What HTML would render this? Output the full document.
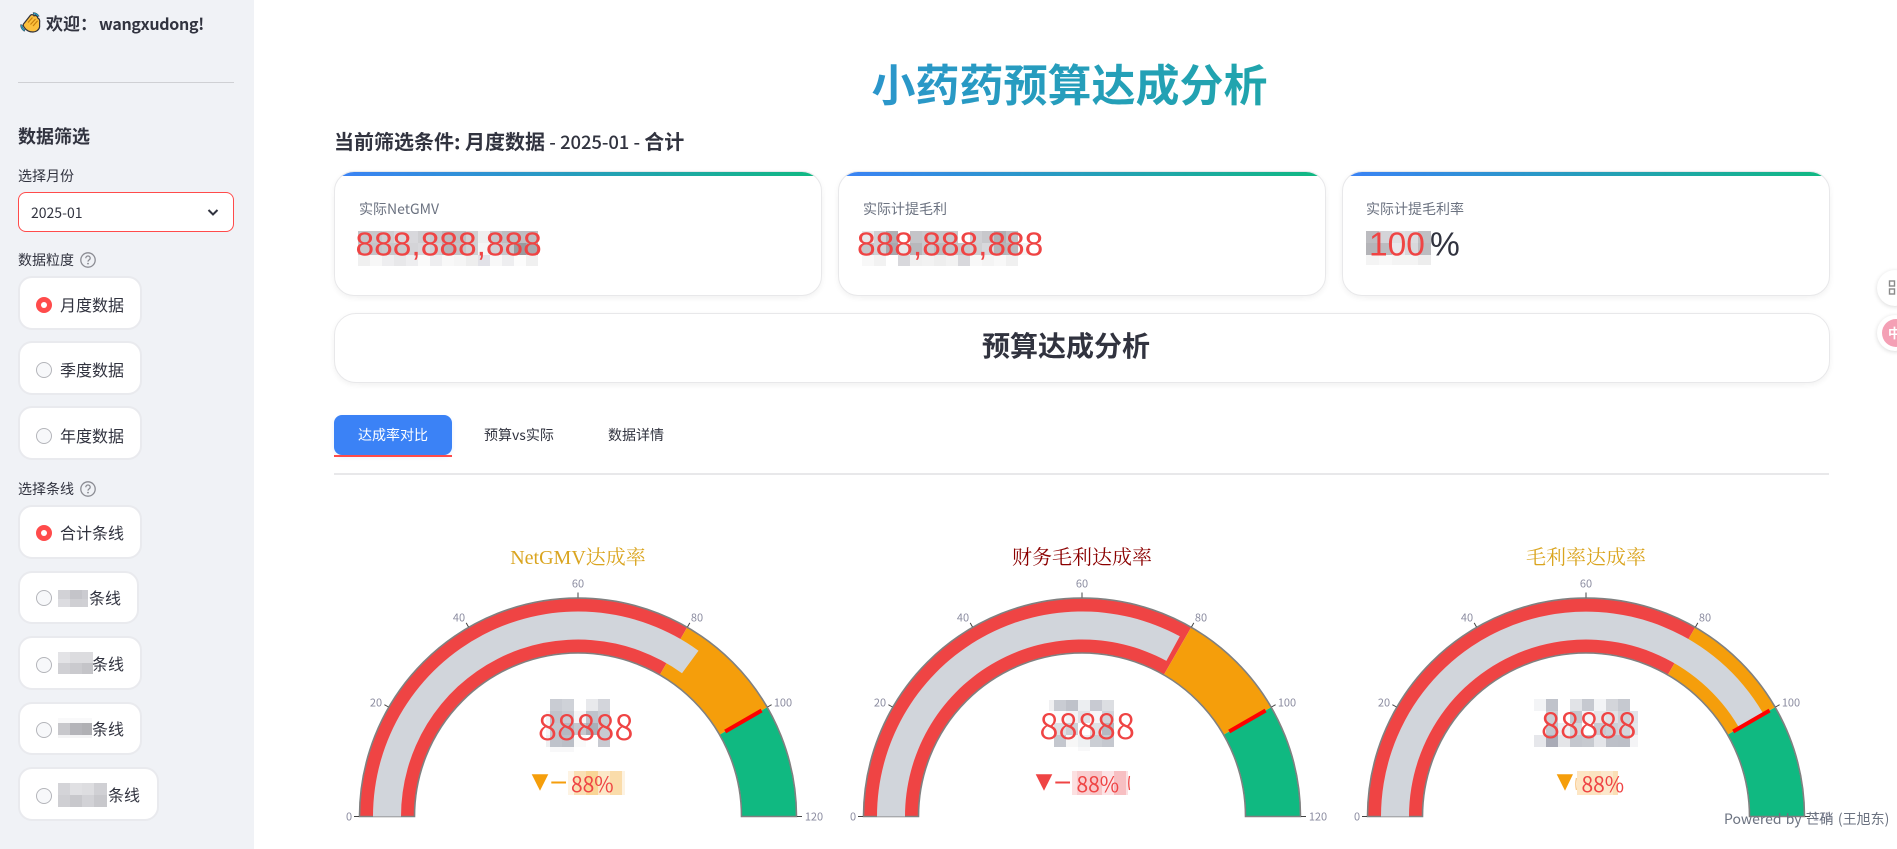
<!DOCTYPE html>
<html lang="zh"><head><meta charset="utf-8"><title>小药药预算达成分析</title>
<style>
html,body{margin:0;padding:0;width:1897px;height:849px;overflow:hidden;background:#fff}
body{position:relative;font-family:"Noto Sans CJK SC","Liberation Sans",sans-serif;color:#31333f}
.a{position:absolute;white-space:nowrap;line-height:1}
.side{position:absolute;left:0;top:0;width:254px;height:849px;background:#f0f2f6}
.radio{position:absolute;left:18px;background:#fff;border:2px solid #e9eaee;border-radius:14px;box-sizing:border-box}
.rc{position:absolute;left:36px;width:16px;height:16px;border-radius:50%;border:1px solid #b4b5ba;background:#f7f8fa;box-sizing:border-box}
.rs{position:absolute;left:36px;width:16px;height:16px;border-radius:50%;background:#ff4b4b}
.rs:after{content:"";position:absolute;left:5px;top:5px;width:6px;height:6px;border-radius:50%;background:#fff}
.rt{font-size:16px}
.card{position:absolute;top:171px;width:488px;height:125px;background:#fff;border:1px solid #e8e8ea;border-radius:20px;box-sizing:border-box;overflow:hidden;box-shadow:0 2px 6px rgba(0,0,0,.06)}
.card:before{content:"";position:absolute;left:0;top:0;right:0;height:4px;background:linear-gradient(90deg,#3b82f6,#10b981)}
.lab{font-size:14px;color:#6b7280}
svg{position:absolute;left:0;top:0}
</style></head><body>

<div class="side"></div>
<svg class="a" style="left:20px;top:12px" width="21" height="21" viewBox="0 0 21 21">
<path d="M3.5 12L10.5 3.2C11.5 2.2 13.5 2.6 14 3.8C15.5 3 17.6 4 17.6 5.8C19.3 6.8 20 8.8 19.6 10.8L19.6 15C19 18 16 20 13 20C9 20 6 18 4.3 15.5C3.4 14.2 2.8 13 3.5 12Z" fill="#fbbf3c" stroke="#33343c" stroke-width="1.2"/>
<path d="M8 10.5L12.5 5.5M10.5 12.5L15.5 7M13 14L17.6 8.8" stroke="#c47d0c" stroke-width="1.1" fill="none"/>
<path d="M13 .6C15.5 .4 18 1.8 19.2 4.2L17.4 4.4C16.4 3 15 2.2 13.4 2.2Z" fill="#1f9ec2" stroke="#33343c" stroke-width=".5"/>
<path d="M.6 12.5C.4 15 1.6 18 4.4 19.4L5 17.8C3.4 16.8 2.4 15 2.2 13Z" fill="#1f9ec2" stroke="#33343c" stroke-width=".5"/>
</svg>
<div class="a" style="left:46px;top:14px;font-size:17px;font-weight:700">欢迎：</div>
<div class="a" style="left:99px;top:15px;font-size:16px;font-weight:700;letter-spacing:-.3px">wangxudong!</div>
<div class="a" style="left:18px;top:82px;width:216px;height:1px;background:#cfd0d4"></div>
<div class="a" style="left:18px;top:127px;font-size:18px;font-weight:700">数据筛选</div>
<div class="a" style="left:18px;top:169px;font-size:14px">选择月份</div>
<div class="a" style="left:18px;top:192px;width:216px;height:40px;background:#fff;border:1px solid #ff4b4b;border-radius:8px;box-sizing:border-box"></div>
<div class="a" style="left:31px;top:206px;font-size:14px">2025-01</div>
<div class="a" style="left:18px;top:253px;font-size:14px">数据粒度</div>
<div class="a" style="left:18px;top:482px;font-size:14px">选择条线</div>

<div class="radio" style="top:276px;width:124px;height:54px"></div>
<div class="rs" style="top:297px"></div><div class="a rt" style="left:60px;top:296px">月度数据</div>
<div class="radio" style="top:341px;width:124px;height:54px"></div>
<div class="rc" style="top:362px"></div><div class="a rt" style="left:60px;top:361px">季度数据</div>
<div class="radio" style="top:406px;width:124px;height:54px"></div>
<div class="rc" style="top:428px"></div><div class="a rt" style="left:60px;top:427px">年度数据</div>
<div class="radio" style="top:505px;width:124px;height:54px"></div>
<div class="rs" style="top:525px"></div><div class="a rt" style="left:60px;top:524px">合计条线</div>
<div class="radio" style="top:571px;width:121px;height:53px"></div>
<div class="rc" style="top:590px"></div><div class="a rt" style="left:89px;top:589px">条线</div>
<div class="radio" style="top:636px;width:124px;height:54px"></div>
<div class="rc" style="top:657px"></div><div class="a rt" style="left:92px;top:655px">条线</div>
<div class="radio" style="top:702px;width:124px;height:53px"></div>
<div class="rc" style="top:722px"></div><div class="a rt" style="left:92px;top:720px">条线</div>
<div class="radio" style="top:767px;width:141px;height:54px"></div>
<div class="rc" style="top:788px"></div><div class="a rt" style="left:108px;top:786px">条线</div>

<div class="a" style="left:334px;top:60px;width:1471px;height:46px;font-size:44px;font-weight:700;text-align:center;background:linear-gradient(90deg,#3b82f6,#10b981);-webkit-background-clip:text;background-clip:text;color:transparent">小药药预算达成分析</div>
<div class="a" style="left:334px;top:131px;font-size:20px;font-weight:700">当前筛选条件: 月度数据<span style="font-size:18.5px;font-weight:500;letter-spacing:-.1px;word-spacing:.2px"> - 2025-01 - </span>合计</div>

<div class="card" style="left:334px"></div>
<div class="card" style="left:838px"></div>
<div class="card" style="left:1342px"></div>
<div class="a" style="left:334px;top:313px;width:1496px;height:70px;background:#fff;border:1px solid #e8e8ea;border-radius:22px;box-sizing:border-box;box-shadow:0 2px 6px rgba(0,0,0,.06)"></div>
<div class="a" style="left:319px;top:331px;width:1494px;text-align:center;font-size:28px;font-weight:700">预算达成分析</div>

<div class="a lab" style="left:359px;top:202px">实际NetGMV</div>
<div class="a lab" style="left:863px;top:202px">实际计提毛利</div>
<div class="a lab" style="left:1366px;top:202px">实际计提毛利率</div>

<div class="a" style="left:334px;top:415px;width:118px;height:40px;background:#3b82f6;border-radius:8px;box-shadow:0 2px 5px rgba(59,130,246,.12)"></div>
<div class="a" style="left:334px;top:455px;width:118px;height:2px;background:#ff4b4b"></div>
<div class="a" style="left:358px;top:428px;font-size:14px;color:#fff">达成率对比</div>
<div class="a" style="left:484px;top:428px;font-size:14px">预算vs实际</div>
<div class="a" style="left:608px;top:428px;font-size:14px">数据详情</div>
<div class="a" style="left:334px;top:473px;width:1495px;height:2px;background:#e8e8ea"></div>

<svg width="1897" height="849" viewBox="0 0 1897 849">
<defs>
<g id="gauge">
<path d="M-218,0A218,218 0 0 1 109,-188.79L82,-142.03A164,164 0 0 0 -164,0Z" fill="#ef4444"/>
<path d="M109,-188.79A218,218 0 0 1 188.79,-109L142.03,-82A164,164 0 0 0 82,-142.03Z" fill="#f59e0b"/>
<path d="M188.79,-109A218,218 0 0 1 218,0L164,0A164,164 0 0 0 142.03,-82Z" fill="#10b981"/>
<path d="M-218.5,0A218.5,218.5 0 0 1 218.5,0L163.5,0A163.5,163.5 0 0 0 -163.5,0Z" fill="none" stroke="#808080" stroke-width="1.6"/>
<g stroke="#444" stroke-width="1" fill="none">
<path d="M-219,0H-224M-189.5,-109.5L-193.6,-111.8M-109.5,-189.5L-111.8,-193.6M0,-219V-224M109.5,-189.5L111.8,-193.6M189.5,-109.5L193.6,-111.8M219,0H224"/>
</g>
</g>
</defs>

<!-- help icons -->
<g fill="none" stroke="#8b8c93" stroke-width="1.3">
<circle cx="88" cy="260" r="7.2"/><circle cx="88" cy="489" r="7.2"/>
<path d="M85.8,258.2c0-2.9,4.4-2.9,4.4,0c0,1.7-2.2,1.7-2.2,3.4M85.8,487.2c0-2.9,4.4-2.9,4.4,0c0,1.7-2.2,1.7-2.2,3.4"/>
</g>
<circle cx="88" cy="263.6" r=".9" fill="#8b8c93"/><circle cx="88" cy="492.6" r=".9" fill="#8b8c93"/>
<path d="M208.5,210L213,214.5L217.5,210" fill="none" stroke="#31333f" stroke-width="2"/>

<!-- sidebar mosaics -->
<g shape-rendering="crispEdges">
<rect x="58" y="590" width="12" height="9" fill="#d2d2d6"/><rect x="70" y="590" width="12" height="9" fill="#c4c4c9"/><rect x="82" y="590" width="6" height="9" fill="#cbcbd0"/>
<rect x="58" y="599" width="12" height="8" fill="#dcdce0"/><rect x="70" y="599" width="12" height="8" fill="#cfcfd3"/><rect x="82" y="599" width="6" height="8" fill="#d0d0d4"/>
<rect x="58" y="652" width="12" height="11" fill="#e3e3e6"/><rect x="70" y="652" width="12" height="11" fill="#dcdcdf"/><rect x="82" y="652" width="11" height="11" fill="#dcdcdf"/>
<rect x="58" y="663" width="12" height="11" fill="#d0d0d4"/><rect x="70" y="663" width="12" height="11" fill="#cacace"/><rect x="82" y="663" width="11" height="11" fill="#c4c4c8"/>
<rect x="58" y="718" width="34" height="5" fill="#f9f9fa"/><rect x="58" y="735" width="34" height="3" fill="#f4f4f5"/>
<rect x="58" y="723" width="12" height="12" fill="#c8c8cc"/><rect x="70" y="723" width="12" height="12" fill="#b4b4b9"/><rect x="82" y="723" width="10" height="12" fill="#b0b0b4"/>
<rect x="58" y="783" width="12" height="12" fill="#d4d4d8"/><rect x="70" y="783" width="12" height="12" fill="#e0e0e3"/><rect x="82" y="783" width="12" height="12" fill="#dddde0"/><rect x="94" y="783" width="13" height="12" fill="#d0d0d4"/>
<rect x="58" y="795" width="12" height="12" fill="#cfcfd3"/><rect x="70" y="795" width="12" height="12" fill="#c8c8cc"/><rect x="82" y="795" width="12" height="12" fill="#d2d2d6"/><rect x="94" y="795" width="13" height="12" fill="#c8c8cc"/>
</g>

<!-- card mosaics -->
<g shape-rendering="crispEdges">
<g transform="translate(358,231)">
<rect x="0" width="12" height="12" fill="#c4c4c8"/><rect x="12" width="12" height="12" fill="#c8c8cb"/><rect x="24" width="12" height="12" fill="#cfcfd2"/><rect x="36" width="12" height="12" fill="#d8d8dc"/><rect x="48" width="12" height="12" fill="#d8d8dc"/><rect x="60" width="12" height="12" fill="#cfcfd2"/><rect x="72" width="12" height="12" fill="#c8c8cc"/><rect x="84" width="12" height="12" fill="#bcbcc0"/><rect x="96" width="12" height="12" fill="#c0c0c4"/><rect x="108" width="12" height="12" fill="#d0d0d2"/><rect x="120" width="12" height="12" fill="#efefef"/><rect x="132" width="12" height="12" fill="#c6c6ca"/><rect x="144" width="12" height="12" fill="#bebec2"/><rect x="156" width="12" height="12" fill="#bebec2"/><rect x="168" width="12" height="12" fill="#bebec2"/>
<g transform="translate(0,12)"><rect x="0" width="12" height="12" fill="#c8c8cb"/><rect x="12" width="12" height="12" fill="#c4c4c8"/><rect x="24" width="12" height="12" fill="#c8c8cb"/><rect x="36" width="12" height="12" fill="#c8c8cb"/><rect x="48" width="12" height="12" fill="#d4d4d8"/><rect x="60" width="12" height="12" fill="#d8d8dc"/><rect x="72" width="12" height="12" fill="#d0d0d4"/><rect x="84" width="12" height="12" fill="#b4b4b8"/><rect x="96" width="12" height="12" fill="#c4c4c8"/><rect x="108" width="12" height="12" fill="#cfcfd2"/><rect x="120" width="12" height="12" fill="#f5f5f5"/><rect x="132" width="12" height="12" fill="#d0d0d4"/><rect x="144" width="12" height="12" fill="#c8c8cc"/><rect x="156" width="12" height="12" fill="#999a9e"/><rect x="168" width="12" height="12" fill="#a9a9ae"/></g>
<g transform="translate(0,24)"><rect x="0" width="12" height="11" fill="#f0f0f0"/><rect x="12" width="12" height="11" fill="#f7f7f7"/><rect x="24" width="12" height="11" fill="#eeeef0"/><rect x="36" width="12" height="11" fill="#e8e8ea"/><rect x="48" width="12" height="11" fill="#eeeef0"/><rect x="60" width="12" height="11" fill="#fafafa"/><rect x="72" width="12" height="11" fill="#eeeef0"/><rect x="84" width="12" height="11" fill="#f8f8f8"/><rect x="96" width="12" height="11" fill="#f5f5f5"/><rect x="108" width="12" height="11" fill="#eeeeee"/><rect x="120" width="12" height="11" fill="#e2e2e8"/><rect x="132" width="12" height="11" fill="#f8f8f8"/><rect x="144" width="12" height="11" fill="#eeeef0"/><rect x="156" width="12" height="11" fill="#fcfcfc"/><rect x="168" width="12" height="11" fill="#f0f0f0"/></g>
</g>
<g transform="translate(862,231)">
<rect x="0" width="12" height="12" fill="#e8e8ea"/><rect x="12" width="12" height="12" fill="#d0d0d4"/><rect x="24" width="12" height="12" fill="#b0b0b4"/><rect x="48" width="12" height="12" fill="#c4c4c8"/><rect x="60" width="12" height="12" fill="#c8c8cc"/><rect x="72" width="12" height="12" fill="#c8c8cc"/><rect x="84" width="12" height="12" fill="#c8c8cc"/><rect x="108" width="12" height="12" fill="#d0d0d4"/><rect x="120" width="12" height="12" fill="#c8c8cc"/><rect x="132" width="12" height="12" fill="#b0b0b4"/><rect x="144" width="12" height="12" fill="#c0c0c4"/>
<g transform="translate(0,12)"><rect x="0" width="12" height="12" fill="#c4c4c8"/><rect x="12" width="12" height="12" fill="#d0d0d4"/><rect x="24" width="12" height="12" fill="#a9a9ae"/><rect x="36" width="12" height="12" fill="#e8e8ea"/><rect x="48" width="12" height="12" fill="#b8b8bc"/><rect x="60" width="12" height="12" fill="#c8c8cc"/><rect x="72" width="12" height="12" fill="#bcbcc0"/><rect x="84" width="12" height="12" fill="#c4c4c8"/><rect x="96" width="12" height="12" fill="#c8c8cc"/><rect x="108" width="12" height="12" fill="#cfcfd2"/><rect x="120" width="12" height="12" fill="#d8d8dc"/><rect x="132" width="12" height="12" fill="#b4b4b8"/><rect x="144" width="12" height="12" fill="#b8b8bc"/><rect x="156" width="12" height="12" fill="#f5f5f5"/></g>
<g transform="translate(0,24)"><rect x="0" width="12" height="11" fill="#f8f8f8"/><rect x="12" width="12" height="11" fill="#f2f2f2"/><rect x="36" width="12" height="11" fill="#d8d8dc"/><rect x="48" width="12" height="11" fill="#f0f0f0"/><rect x="60" width="12" height="11" fill="#f2f2f2"/><rect x="72" width="12" height="11" fill="#eeeeee"/><rect x="84" width="12" height="11" fill="#f2f2f2"/><rect x="96" width="12" height="11" fill="#d8d8dc"/><rect x="108" width="12" height="11" fill="#f8f8f8"/><rect x="120" width="12" height="11" fill="#f4f4f4"/><rect x="132" width="12" height="11" fill="#f8f8f8"/><rect x="144" width="12" height="11" fill="#f0f0f0"/></g>
</g>
<g transform="translate(1366,231)">
<rect x="0" width="13" height="12" fill="#bcbcc0"/><rect x="13" width="13" height="12" fill="#d4d4d8"/><rect x="26" width="13" height="12" fill="#e0e0e3"/><rect x="39" width="13" height="12" fill="#dcdce0"/><rect x="52" width="13" height="12" fill="#c0c0c4"/>
<g transform="translate(0,12)"><rect x="0" width="13" height="12" fill="#b4b4b8"/><rect x="13" width="13" height="12" fill="#bcbcc0"/><rect x="26" width="13" height="12" fill="#e8e8ec"/><rect x="39" width="13" height="12" fill="#d8d8dc"/><rect x="52" width="13" height="12" fill="#bcbcc0"/></g>
<g transform="translate(0,24)"><rect x="0" width="13" height="10" fill="#f4f4f4"/><rect x="13" width="13" height="10" fill="#f8f8f8"/><rect x="26" width="13" height="10" fill="#f4f4f4"/><rect x="39" width="13" height="10" fill="#f4f4f4"/><rect x="52" width="13" height="10" fill="#ededed"/></g>
</g>
</g>
<g font-family="Liberation Sans, sans-serif" font-size="33.5" fill="#ef4444">
<text x="355.5" y="255.5">888,888,888</text>
<text x="857" y="255.5">888,888,888</text>
<text x="1369" y="255.5">100</text>
<text x="1430" y="255.5" fill="#31333f">%</text>
</g>

<!-- gauge titles -->
<g font-family="Liberation Serif, Noto Serif CJK SC, serif" font-size="20" text-anchor="middle">
<text x="578" y="564" fill="#daa520">NetGMV达成率</text>
<text x="1082" y="564" fill="#8b0000">财务毛利达成率</text>
<text x="1586" y="564" fill="#daa520">毛利率达成率</text>
</g>

<!-- Gauge 1 -->
<g transform="translate(578,816.5)">
<use href="#gauge"/>
<path d="M-205,0A205,205 0 0 1 120.5,-165.8L104,-143.2A177,177 0 0 0 -177,0Z" fill="#d1d5db"/>
<path d="M147.2,-85L183.6,-106" stroke="#f00" stroke-width="4" fill="none"/>
<g font-size="11" fill="#8b8ca0" text-anchor="middle"><text x="-229" y="4">0</text><text x="-202" y="-110">20</text><text x="-119" y="-195">40</text><text x="0" y="-229">60</text><text x="119" y="-195">80</text><text x="205" y="-110">100</text><text x="236" y="4">120</text></g>
</g>
<!-- Gauge 2 -->
<g transform="translate(1082,816.5)">
<use href="#gauge"/>
<path d="M-205,0A205,205 0 0 1 97.8,-180.2L84.4,-155.6A177,177 0 0 0 -177,0Z" fill="#d1d5db"/>
<path d="M147.2,-85L183.6,-106" stroke="#f00" stroke-width="4" fill="none"/>
<g font-size="11" fill="#8b8ca0" text-anchor="middle"><text x="-229" y="4">0</text><text x="-202" y="-110">20</text><text x="-119" y="-195">40</text><text x="0" y="-229">60</text><text x="119" y="-195">80</text><text x="205" y="-110">100</text><text x="236" y="4">120</text></g>
</g>
<!-- Gauge 3 -->
<g transform="translate(1586,816.5)">
<use href="#gauge"/>
<path d="M-205,0A205,205 0 0 1 176.6,-104L152.5,-89.8A177,177 0 0 0 -177,0Z" fill="#d1d5db"/>
<path d="M147.2,-85L183.6,-106" stroke="#f00" stroke-width="4" fill="none"/>
<g font-size="11" fill="#8b8ca0" text-anchor="middle"><text x="-229" y="4">0</text><text x="-202" y="-110">20</text><text x="-119" y="-195">40</text><text x="0" y="-229">60</text><text x="119" y="-195">80</text><text x="205" y="-110">100</text><text x="236" y="4">120</text></g>
</g>

<!-- gauge number mosaics -->
<g shape-rendering="crispEdges">
<g transform="translate(538,699)">
<rect x="12" width="12" height="12" fill="#c9ccd3"/><rect x="24" width="12" height="12" fill="#cfd2d8"/><rect x="48" width="12" height="12" fill="#e8e9ec"/><rect x="60" width="12" height="12" fill="#d3d5db"/>
<rect x="8" y="12" width="4" height="12" fill="#f5f5f7"/><rect x="12" y="12" width="12" height="12" fill="#c0c3cb"/><rect x="24" y="12" width="12" height="12" fill="#c8cad1"/><rect x="36" y="12" width="12" height="12" fill="#f5f5f7"/><rect x="48" y="12" width="12" height="12" fill="#bfc2cb"/><rect x="60" y="12" width="12" height="12" fill="#c9ccd3"/>
<rect x="8" y="24" width="4" height="12" fill="#f5f5f7"/><rect x="12" y="24" width="12" height="12" fill="#c3c6cd"/><rect x="24" y="24" width="12" height="12" fill="#b5b8c1"/><rect x="36" y="24" width="12" height="12" fill="#c5c8ce"/><rect x="48" y="24" width="12" height="12" fill="#abafb8"/><rect x="60" y="24" width="12" height="12" fill="#c7cad0"/>
<rect x="8" y="36" width="4" height="12" fill="#eeeff1"/><rect x="12" y="36" width="12" height="12" fill="#bfc3cb"/><rect x="24" y="36" width="12" height="12" fill="#bbbfc7"/><rect x="36" y="36" width="12" height="12" fill="#fafafa"/><rect x="60" y="36" width="12" height="12" fill="#c8cad1"/>
<rect x="12" y="48" width="24" height="5" fill="#f8f8f9"/>
</g>
<g transform="translate(1054,699)">
<rect x="-5" y="1" width="5" height="11" fill="#f0f0f2"/><rect x="0" y="1" width="12" height="11" fill="#c9ccd3"/><rect x="12" y="1" width="12" height="11" fill="#bfc2ca"/><rect x="24" y="1" width="12" height="11" fill="#eceef1"/><rect x="36" y="1" width="12" height="11" fill="#c8cad2"/><rect x="48" y="1" width="12" height="11" fill="#dcdee2"/>
<rect x="0" y="12" width="12" height="12" fill="#fbfbfc"/><rect x="12" y="12" width="12" height="12" fill="#f3f3f5"/><rect x="24" y="12" width="12" height="12" fill="#e1e2e6"/><rect x="36" y="12" width="12" height="12" fill="#f7f7f9"/><rect x="48" y="12" width="12" height="12" fill="#d0d2d8"/>
<rect x="0" y="24" width="12" height="12" fill="#dde0e4"/><rect x="12" y="24" width="12" height="12" fill="#cdd0d6"/><rect x="36" y="24" width="12" height="12" fill="#e0e1e5"/><rect x="48" y="24" width="12" height="12" fill="#b5b8c1"/>
<rect x="0" y="36" width="12" height="12" fill="#c4c7ce"/><rect x="12" y="36" width="12" height="12" fill="#f7f7f7"/><rect x="24" y="36" width="12" height="12" fill="#eef0f2"/><rect x="36" y="36" width="12" height="12" fill="#cbced4"/><rect x="48" y="36" width="12" height="12" fill="#c5c8cf"/>
<rect x="24" y="48" width="12" height="4" fill="#f8f8f9"/>
</g>
<g transform="translate(1534,699)">
<rect x="0" width="12" height="12" fill="#f3f4f6"/><rect x="12" width="12" height="12" fill="#c0c3cb"/><rect x="36" width="12" height="12" fill="#e1e3e7"/><rect x="48" width="12" height="12" fill="#c6c9d0"/><rect x="60" width="12" height="12" fill="#f3f4f6"/><rect x="72" width="12" height="12" fill="#d3d5da"/><rect x="84" width="12" height="12" fill="#c6c9d0"/>
<rect x="12" y="12" width="12" height="12" fill="#ccced4"/><rect x="36" y="12" width="12" height="12" fill="#c4c7ce"/><rect x="48" y="12" width="12" height="12" fill="#f5f5f7"/><rect x="60" y="12" width="12" height="12" fill="#e6e7ea"/><rect x="72" y="12" width="12" height="12" fill="#e0e2e6"/><rect x="84" y="12" width="12" height="12" fill="#d0d2d8"/><rect x="96" y="12" width="8" height="12" fill="#e2e3e8"/>
<rect x="12" y="24" width="12" height="12" fill="#c4c7cf"/><rect x="24" y="24" width="12" height="12" fill="#efeff2"/><rect x="36" y="24" width="12" height="12" fill="#d3d5da"/><rect x="60" y="24" width="12" height="12" fill="#c8cad1"/><rect x="72" y="24" width="12" height="12" fill="#cdd0d6"/><rect x="84" y="24" width="12" height="12" fill="#d3d5db"/><rect x="96" y="24" width="8" height="12" fill="#e5e6ea"/>
<rect x="0" y="36" width="12" height="12" fill="#e6e7eb"/><rect x="12" y="36" width="12" height="12" fill="#a9abb6"/><rect x="24" y="36" width="12" height="12" fill="#e4e5e8"/><rect x="36" y="36" width="12" height="12" fill="#c4c7ce"/><rect x="48" y="36" width="12" height="12" fill="#c7cad0"/><rect x="60" y="36" width="12" height="12" fill="#e4e5e9"/><rect x="72" y="36" width="12" height="12" fill="#bdc0c8"/><rect x="84" y="36" width="12" height="12" fill="#bcbfc7"/><rect x="96" y="36" width="8" height="12" fill="#f4f4f6"/>
</g>
<!-- delta mosaics -->
<g transform="translate(0,771)">
<rect x="568" width="6" height="24" fill="#fdf3e3"/><rect x="574" width="12" height="24" fill="#fadfb4"/><rect x="586" width="12" height="24" fill="#f9d596"/><rect x="598" width="12" height="24" fill="#fce8c8"/><rect x="610" width="12" height="24" fill="#fadcaa"/><rect x="622" width="3" height="24" fill="#fdf3e3"/>
<rect x="1072" width="5" height="24" fill="#fce0e1"/><rect x="1077" width="13" height="24" fill="#f9cfd1"/><rect x="1090" width="12" height="24" fill="#f8c6c8"/><rect x="1102" width="12" height="24" fill="#fbe4e6"/><rect x="1114" width="12" height="24" fill="#f7bfc2"/><rect x="1126" width="2" height="24" fill="#fbe0e2"/>
<rect x="1577" width="12" height="24" fill="#fde6c4"/><rect x="1589" width="12" height="24" fill="#fbe3c0"/><rect x="1601" width="12" height="24" fill="#fce8cc"/><rect x="1613" width="5" height="24" fill="#fbdfb6"/>
</g>
</g>
<path d="M1129.5,776q-1.5,7 0,14" fill="none" stroke="#ef4444" stroke-width="1.3"/>
<path d="M1576.5,778q-1.5,6 0,12" fill="none" stroke="#f8c888" stroke-width="1.3"/>

<!-- gauge center numbers -->
<g font-size="34.5" fill="#ef4444" font-weight="350" letter-spacing=".2">
<text x="538" y="740">88888</text>
<text x="1039.5" y="739">88888</text>
<text x="1541" y="738">88888</text>
</g>
<!-- deltas -->
<path d="M531.7,774.3H548.3L540,790.7Z" fill="#f59e0b"/>
<rect x="551.3" y="781.5" width="14.7" height="2" fill="#f59e0b"/>
<path d="M1035.7,774.3H1052.3L1044,790.7Z" fill="#ef4444"/>
<rect x="1055.3" y="781.5" width="14.7" height="2" fill="#ef4444"/>
<path d="M1556.7,774.3H1573L1565,790.7Z" fill="#f59e0b"/>
<g font-size="21" fill="#ef4444">
<text x="571" y="792">88%</text>
<text x="1076.5" y="792">88%</text>
<text x="1581.5" y="792">88%</text>
</g>
<text x="1724" y="824" font-size="14" fill="#6b7280" word-spacing="1">Powered by 芒硝 (王旭东)</text>
</svg>

<!-- right floating buttons -->
<div class="a" style="left:1877px;top:270px;width:36px;height:36px;border-radius:50%;background:#fff;box-shadow:0 1px 5px rgba(0,0,0,.15)"></div>
<svg class="a" style="left:1888px;top:279px" width="10" height="18" viewBox="0 0 10 18"><g fill="none" stroke="#8a8a8a" stroke-width="1.4"><rect x="1.5" y="2" width="5" height="5"/><rect x="1.5" y="10" width="5" height="5"/><path d="M9,4.5h2M9,12.5h2"/></g></svg>
<div class="a" style="left:1877px;top:315px;width:36px;height:36px;border-radius:50%;background:#fff;box-shadow:0 1px 5px rgba(0,0,0,.15)"></div>
<div class="a" style="left:1882px;top:319px;width:28px;height:28px;border-radius:50%;background:#f4a0b5"></div>
<div class="a" style="left:1888px;top:326px;font-size:13px;font-weight:700;color:#fff">中</div>
</body></html>
